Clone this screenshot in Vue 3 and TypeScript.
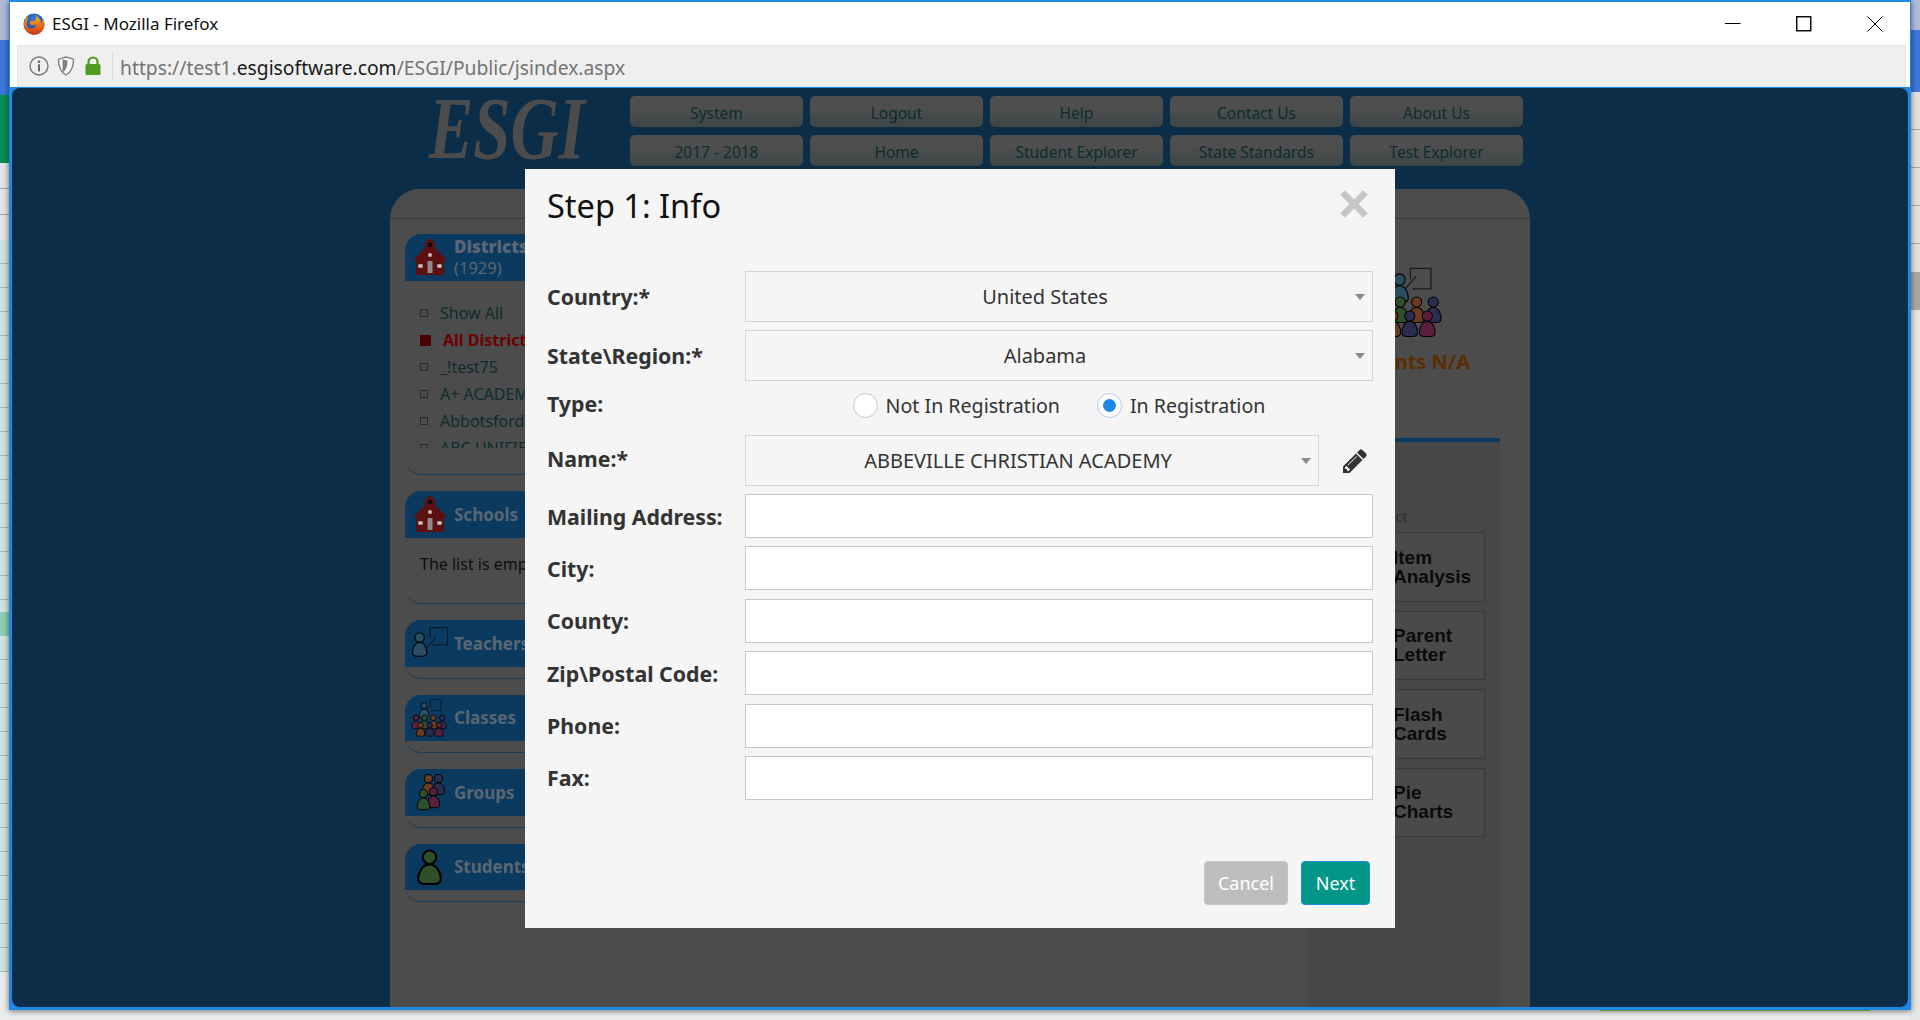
<script setup lang="ts">
import { ref } from 'vue';

type Person = { x: number; y: number; s: number; c: string };

const topNav = ['System', 'Logout', 'Help', 'Contact Us', 'About Us', '2017 - 2018', 'Home', 'Student Explorer', 'State Standards', 'Test Explorer'];
const districts = [
  { name: 'Show All', active: false },
  { name: 'All Districts', active: true },
  { name: '_!test75', active: false },
  { name: 'A+ ACADEMY', active: false },
  { name: 'Abbotsford', active: false },
  { name: 'ABC UNIFIED', active: false },
];
const tests = [
  ['Item', 'Analysis'],
  ['Parent', 'Letter'],
  ['Flash', 'Cards'],
  ['Pie', 'Charts'],
];
const textFields = ['Mailing Address:', 'City:', 'County:', 'Zip\\Postal Code:', 'Phone:', 'Fax:'];

const blue = '#2a4d62';
const brown = '#6a3a22';
const navy = '#2a2d50';
const red = '#5a1f3a';
const green = '#2f4f2b';

// the same little figure is reused by all the people icons
const classPeople: Person[] = [
  { x: 7.5, y: 2.5, s: 0.47, c: blue },
  { x: 0, y: 15, s: 0.42, c: red },
  { x: 8.5, y: 15, s: 0.42, c: green },
  { x: 17.3, y: 15, s: 0.42, c: brown },
  { x: 26.2, y: 15, s: 0.42, c: navy },
  { x: 4.5, y: 22.5, s: 0.42, c: brown },
  { x: 13.6, y: 22.5, s: 0.42, c: navy },
  { x: 23, y: 22.5, s: 0.42, c: red },
];
const groupPeople: Person[] = [
  { x: 6, y: 0, s: 0.62, c: brown },
  { x: 16, y: 0, s: 0.62, c: navy },
  { x: 11, y: 13, s: 0.62, c: red },
  { x: 1, y: 15, s: 0.62, c: green },
];

const regType = ref('in');
</script>

<template>
  <div class="desktop">
    <div class="sheet-left">
      <div class="seg-a"></div>
      <div class="seg-b"></div>
      <div class="seg-c"></div>
      <div class="seg-d"></div>
      <div class="seg-e"></div>
      <div class="seg-f"></div>
      <div class="seg-e2"></div>
      <div class="seg-g"></div>
    </div>
    <div class="sheet-right">
      <div class="seg-a2"></div>
      <div class="seg-b2"></div>
      <div class="seg-d2"></div>
      <div class="thumb"></div>
      <div class="seg-h"></div>
    </div>
    <div class="green-line"></div>

    <div class="window">
      <div class="titlebar">
        <svg class="ff" width="22" height="22" viewBox="0 0 22 22">
          <defs>
            <radialGradient id="ffGlobe" cx="0.55" cy="0.3" r="0.7">
              <stop offset="0" stop-color="#3f7fd0" />
              <stop offset="1" stop-color="#1f3f86" />
            </radialGradient>
            <linearGradient id="ffFox" x1="0" y1="0" x2="0" y2="1">
              <stop offset="0" stop-color="#f7b21c" />
              <stop offset="0.6" stop-color="#e8631a" />
              <stop offset="1" stop-color="#c8341a" />
            </linearGradient>
          </defs>
          <circle cx="11" cy="11" r="10.5" fill="url(#ffGlobe)" />
          <path d="M5 2.5C1.5 6 .2 11 1.8 15c1.8 4.4 5.5 6.8 9.4 6.8 5.6 0 10.3-4.5 10.3-10.3 0-2.4-.8-4.6-2.2-6.4.4 2.8-.2 4.8-1.2 6 .2-3.6-2-6.6-5.4-8.6 1.2 2.2.8 4.4-.8 5.2-1.6.6-3.4-.2-4.6.8-1 .9-.8 2.4.6 3.2 2 .9 4.6.2 5.4-.4-.2 2.6-2.6 4.6-5.4 4.4C5 15.4 3.2 12.4 3.8 9.4 4 8 4.6 6.4 5 2.5z" fill="url(#ffFox)" />
        </svg>
        <span class="win-title">ESGI - Mozilla Firefox</span>
        <div class="win-controls">
          <svg width="16" height="16" viewBox="0 0 16 16"><path d="M0 7.5h15.5" stroke="#000" stroke-width="1" /></svg>
          <svg width="16" height="16" viewBox="0 0 16 16"><rect x="0.75" y="0.75" width="14" height="14" fill="none" stroke="#000" stroke-width="1.4" /></svg>
          <svg width="16" height="16" viewBox="0 0 16 16"><path d="M.5.5l15 15M15.5.5l-15 15" stroke="#000" stroke-width="1" /></svg>
        </div>
      </div>

      <div class="urlbar">
        <svg class="u-info" width="20" height="20" viewBox="0 0 20 20">
          <circle cx="10" cy="10" r="9" fill="none" stroke="#777" stroke-width="1.4" />
          <circle cx="10" cy="5.8" r="1.3" fill="#666" />
          <rect x="9" y="8.4" width="2" height="7" fill="#666" />
        </svg>
        <svg class="u-shield" width="18" height="20" viewBox="0 0 18 20">
          <path d="M9 1l7.5 2.2c0 7-1.5 12.6-7.5 15.8C3 15.800 1.500 10.200 1.500 3.200z" fill="#fafafa" stroke="#808080" stroke-width="1.4" />
          <path d="M9 3.200l5 1.500c0 5-1 9.200-5 11.800z" fill="#808080" transform="translate(-3.500 0)" />
        </svg>
        <svg class="u-lock" width="18" height="20" viewBox="0 0 18 20">
          <path d="M4.500 9V6a4.500 4.500 0 0 1 9 0v3" fill="none" stroke="#4f9c20" stroke-width="2.200" />
          <rect x="1.500" y="8" width="15" height="11" rx="1.500" fill="#4f9c20" />
        </svg>
        <span class="u-sep"></span>
        <span class="url">https://test1.<b>esgisoftware.com</b>/ESGI/Public/jsindex.aspx</span>
      </div>

      <div class="viewport-frame">
        <div class="viewport">
          <div class="page">
            <header class="page-head">
              <div class="logo">ESGI</div>
              <nav class="top-nav">
                <div v-for="n in topNav" :key="n" class="nav-btn">{{ n }}</div>
              </nav>
            </header>

            <section class="panel">
              <div class="panel-cap"></div>
              <div class="panel-body">
                <aside class="sidebar">
                  <div class="box box-districts">
                    <div class="box-head">
                      <span class="box-icon">
                        <svg width="34" height="38" viewBox="0 0 34 38">
                          <path d="M17 0l5 5v5l12 12h-3v15H3V22H0l12-12V5z" fill="#5c1010" />
                          <rect x="15" y="5" width="4" height="4" fill="#0a0a0a" />
                          <path d="M15 15h4v4h-4zM5 26h5v4H5zM24 26h5v4h-5z" fill="#c8c8c8" stroke="#5c1010" stroke-width=".6" />
                          <rect x="14.500" y="23" width="5" height="12" fill="#8a8a8a" />
                        </svg>
                      </span>
                      <span class="box-title two">
                        <b>Districts</b>
                        <span>(1929)</span>
                      </span>
                    </div>
                    <div class="district-list">
                      <div v-for="d in districts" :key="d.name" class="district" :class="{ on: d.active }">
                        <i class="mark"></i>{{ d.name }}
                      </div>
                    </div>
                  </div>

                  <div class="box box-schools">
                    <div class="box-head">
                      <span class="box-icon">
                        <svg width="34" height="38" viewBox="0 0 34 38">
                          <path d="M17 0l5 5v5l12 12h-3v15H3V22H0l12-12V5z" fill="#5c1010" />
                          <rect x="15" y="5" width="4" height="4" fill="#0a0a0a" />
                          <path d="M15 15h4v4h-4zM5 26h5v4H5zM24 26h5v4h-5z" fill="#c8c8c8" stroke="#5c1010" stroke-width=".6" />
                          <rect x="14.500" y="23" width="5" height="12" fill="#8a8a8a" />
                        </svg>
                      </span>
                      <b class="box-title">Schools</b>
                    </div>
                    <div class="empty">The list is empty</div>
                  </div>

                  <div class="box">
                    <div class="box-head">
                      <span class="box-icon">
                        <svg width="37" height="32" viewBox="0 0 37 32">
                          <g transform="translate(0 4) scale(.72)">
                            <circle cx="12" cy="9" r="6.500" fill="#2a4d62" stroke="#000" stroke-width="1.500" />
                            <path d="M12 16C5 16 2 24 2 30c0 4 3 5 6 5h8c3 0 6-1 6-5 0-6-3-14-10-14z" fill="#2a4d62" stroke="#000" stroke-width="1.500" />
                          </g>
                          <path d="M19 .6h17.400v17.400H21" fill="none" stroke="#0a1a24" stroke-width="1.100" />
                          <path d="M19 .6v10M16 21l9-11" fill="none" stroke="#0a1a24" stroke-width="1.100" />
                        </svg>
                      </span>
                      <b class="box-title">Teachers</b>
                    </div>
                  </div>

                  <div class="box">
                    <div class="box-head">
                      <span class="box-icon">
                        <svg width="37" height="38" viewBox="0 0 37 38">
                          <path d="M19 .7h11v11H20M19 .7v6M15 13l7-8" fill="none" stroke="#0a1a24" stroke-width=".9" />
                          <g v-for="(p, i) in classPeople" :key="i" :transform="`translate(${p.x} ${p.y}) scale(${p.s})`">
                            <circle cx="12" cy="9" r="6.500" :fill="p.c" stroke="#000" stroke-width="1.800" />
                            <path d="M12 16C5 16 2 24 2 30c0 4 3 5 6 5h8c3 0 6-1 6-5 0-6-3-14-10-14z" :fill="p.c" stroke="#000" stroke-width="1.800" />
                          </g>
                        </svg>
                      </span>
                      <b class="box-title">Classes</b>
                    </div>
                  </div>

                  <div class="box">
                    <div class="box-head">
                      <span class="box-icon">
                        <svg width="30" height="38" viewBox="0 0 30 38">
                          <g v-for="(p, i) in groupPeople" :key="i" :transform="`translate(${p.x} ${p.y}) scale(${p.s})`">
                            <circle cx="12" cy="9" r="6.500" :fill="p.c" stroke="#000" stroke-width="1.600" />
                            <path d="M12 16C5 16 2 24 2 30c0 4 3 5 6 5h8c3 0 6-1 6-5 0-6-3-14-10-14z" :fill="p.c" stroke="#000" stroke-width="1.600" />
                          </g>
                        </svg>
                      </span>
                      <b class="box-title">Groups</b>
                    </div>
                  </div>

                  <div class="box">
                    <div class="box-head">
                      <span class="box-icon">
                        <svg width="25" height="37" viewBox="0 0 24 36">
                          <circle cx="12" cy="9" r="6.500" fill="#2f4f2b" stroke="#000" stroke-width="2" />
                          <path d="M12 16C5 16 1 24 1 30c0 4 3 5 6 5h10c3 0 6-1 6-5 0-6-4-14-11-14z" fill="#2f4f2b" stroke="#000" stroke-width="2" />
                        </svg>
                      </span>
                      <b class="box-title">Students</b>
                    </div>
                  </div>
                </aside>

                <div class="content">
                  <div class="summary">
                    <div class="summary-box">
                      <svg class="summary-icon" width="69" height="71" viewBox="0 0 37 38">
                        <path d="M19 .7h11v11H20M19 .7v6M15 13l7-8" fill="none" stroke="#1a1a1a" stroke-width=".7" />
                        <g v-for="(p, i) in classPeople" :key="i" :transform="`translate(${p.x} ${p.y}) scale(${p.s})`">
                          <circle cx="12" cy="9" r="6.500" :fill="p.c" stroke="#000" stroke-width="1.300" />
                          <path d="M12 16C5 16 2 24 2 30c0 4 3 5 6 5h8c3 0 6-1 6-5 0-6-3-14-10-14z" :fill="p.c" stroke="#000" stroke-width="1.300" />
                        </g>
                      </svg>
                      <b class="students-na">Students N/A</b>
                    </div>
                  </div>
                  <div class="tests">
                    <div class="tests-head">
                      <div class="th-a">Test</div>
                      <div class="th-b">Select</div>
                    </div>
                    <div v-for="t in tests" :key="t[0]" class="test-btn">
                      <span>{{ t[0] }}</span>
                      <span>{{ t[1] }}</span>
                    </div>
                  </div>
                </div>
              </div>
            </section>
          </div>

          <div class="modal">
            <div class="modal-head">
              <h2>Step 1: Info</h2>
              <svg class="close" width="30" height="30" viewBox="0 0 30 30">
                <path d="M3.500 3.500l23 23M26.500 3.500l-23 23" stroke="#c6c6c6" stroke-width="6.500" />
              </svg>
            </div>

            <div class="form">
              <div class="row row-select">
                <label>Country:*</label>
                <div class="select">United States</div>
              </div>
              <div class="row row-select">
                <label>State\Region:*</label>
                <div class="select">Alabama</div>
              </div>
              <div class="row row-type">
                <label>Type:</label>
                <div class="radios">
                  <span class="radio-item" @click="regType = 'not'">
                    <i class="radio" :class="{ on: regType === 'not' }"></i>Not In Registration
                  </span>
                  <span class="radio-item" @click="regType = 'in'">
                    <i class="radio" :class="{ on: regType === 'in' }"></i>In Registration
                  </span>
                </div>
              </div>
              <div class="row row-select row-name">
                <label>Name:*</label>
                <div class="select">ABBEVILLE CHRISTIAN ACADEMY</div>
                <svg class="pencil" width="28" height="28" viewBox="0 0 1792 1792">
                  <path d="M491 1536l91-91-235-235-91 91v107h128v128h107zm523-928q0-22-22-22-10 0-17 7l-542 542q-7 7-7 17 0 22 22 22 10 0 17-7l542-542q7-7 7-17zm-54-192l416 416-832 832h-416v-416zm683 96q0 53-37 90l-166 166-416-416 166-165q36-38 90-38 53 0 91 38l235 234q37 39 37 91z" fill="#333" />
                </svg>
              </div>
              <div v-for="f in textFields" :key="f" class="row row-input">
                <label>{{ f }}</label>
                <input type="text" />
              </div>
            </div>

            <div class="modal-foot">
              <button class="btn cancel">Cancel</button>
              <button class="btn next">Next</button>
            </div>
          </div>
        </div>
      </div>
    </div>
  </div>
</template>

<style>
html, body { margin: 0; padding: 0; }
</style>

<style scoped>
.desktop {
  position: relative;
  width: 1920px;
  height: 1020px;
  overflow: hidden;
  background: linear-gradient(#c9c9c9, #ececec 9px);
  font-family: "Noto Sans", "Liberation Sans", sans-serif;
}

/* bits of the spreadsheet behind the browser window */
.sheet-left, .sheet-right {
  position: absolute;
  top: 0;
  width: 10px;
  height: 1020px;
  display: flex;
  flex-direction: column;
}
.sheet-left { left: 0; }
.sheet-right { right: 0; }
.seg-a { height: 40px; background: #aebad6; }
.seg-b { height: 55px; background: #3f78dc; }
.seg-c { height: 68px; background: #0c8f50; }
.seg-d { height: 77px; background: repeating-linear-gradient(#e4e4e4 0 25px, #a6a6a6 25px 26px); }
.seg-e {
  height: 372px;
  background: repeating-linear-gradient(#d4e4dc 0 23px, #a9b5af 23px 24px);
}
.seg-f { height: 24px; background: #90ccb0; }
.seg-e2 {
  height: 336px;
  background: repeating-linear-gradient(#d4e4dc 0 23px, #a9b5af 23px 24px);
}
.seg-g { flex: 1; background: #ececec; }
.seg-a2 { height: 30px; background: #b0bcd8; }
.seg-b2 { height: 62px; background: #3f78dc; }
.seg-d2 { height: 180px; background: repeating-linear-gradient(#e2e2e2 0 37px, #a8a8a8 37px 38px); }
.thumb { height: 38px; background: #a8a8a8; }
.seg-h { flex: 1; background: #e6e6e6; }
.green-line {
  position: absolute;
  left: 1600px;
  top: 1010px;
  width: 270px;
  height: 1px;
  background: #5d9428;
  z-index: 2;
}

.window {
  position: absolute;
  left: 9px;
  top: 0;
  width: 1902px;
  height: 1010px;
  box-sizing: border-box;
  border: 1px solid #1e88e5;
  border-top-width: 2px;
  background: #fff;
  box-shadow: 0 1px 6px rgba(0, 0, 0, 0.55);
  display: flex;
  flex-direction: column;
}

.titlebar {
  height: 43px;
  display: flex;
  align-items: center;
  padding-left: 13px;
  flex: none;
}
.ff { margin-right: 7px; }
.win-title { font-size: 17px; color: #111; }
.win-controls {
  margin-left: auto;
  display: flex;
  gap: 55px;
  padding-right: 27px;
}

.urlbar {
  height: 42px;
  margin: 0 4px 0 7px;
  box-sizing: border-box;
  border: 1px solid #e4e4e4;
  background: #efefef;
  display: flex;
  align-items: center;
  flex: none;
}
.u-info { margin-left: 11px; }
.u-shield { margin-left: 8px; }
.u-lock { margin-left: 9px; }
.u-sep {
  width: 1px;
  height: 26px;
  background: #d8d8d8;
  margin-left: 10px;
}
.url {
  margin-left: 7px;
  padding-top: 2px;
  font-size: 19.3px;
  color: #737373;
  white-space: nowrap;
}
.url b { font-weight: 400; color: #1a1a1a; }

.viewport-frame {
  flex: 1;
  min-height: 0;
  box-sizing: border-box;
  padding: 1px 2px 2px 2px;
  background: #1e88e5;
  display: flex;
}
.viewport {
  position: relative;
  flex: 1;
  background: #0b2d48;
  border-radius: 8px;
  overflow: hidden;
}

.page {
  height: 100%;
  margin-left: 378px;
  width: 1140px;
  display: flex;
  flex-direction: column;
}
.page-head {
  height: 101px;
  box-sizing: border-box;
  padding-top: 8px;
  display: flex;
  flex: none;
}
.logo {
  width: 240px;
  box-sizing: border-box;
  padding-left: 38px;
  font-family: "Liberation Serif", serif;
  font-weight: 700;
  font-style: italic;
  font-size: 88px;
  line-height: 66px;
  color: #4c4c4c;
  white-space: nowrap;
  transform: scaleX(0.76);
  transform-origin: 41px 0;
  -webkit-box-reflect: below -10px linear-gradient(transparent 72%, rgba(255, 255, 255, 0.12));
}
.top-nav {
  display: grid;
  grid-template-columns: repeat(5, 173px);
  grid-auto-rows: 31px;
  gap: 8px 7px;
}
.nav-btn {
  border-radius: 5px;
  background: linear-gradient(#4e4e4e 40%, #3c4646);
  color: #0c2c2e;
  font-size: 15.5px;
  text-align: center;
  line-height: 34px;
}

.panel {
  flex: 1;
  display: flex;
  flex-direction: column;
  min-height: 0;
  background: #4c4c4c;
  border-radius: 30px 30px 0 0;
}
.panel-cap {
  height: 29px;
  flex: none;
  border-bottom: 1px solid #3a3a3a;
}
.panel-body {
  flex: 1;
  display: flex;
  min-height: 0;
}
.sidebar {
  width: 300px;
  margin-left: 15px;
  padding-top: 15px;
  display: flex;
  flex-direction: column;
  gap: 16px;
  flex: none;
}

.box {
  height: 58.5px;
  box-sizing: border-box;
  border-bottom: 1px solid #163f5e;
  border-radius: 16px 0 0 16px;
}
.box-districts { height: 241px; }
.box-schools { height: 113px; }
.box-head {
  height: 46.5px;
  background: #0b3a60;
  border-radius: 16px 0 0 0;
  display: flex;
  align-items: center;
}
.box-icon {
  width: 49px;
  display: flex;
  justify-content: center;
  flex: none;
}
.box-title {
  font-size: 17px;
  font-weight: 700;
  color: #5a6672;
}
.box-title.two {
  display: flex;
  flex-direction: column;
  line-height: 21px;
}
.box-title.two span { font-weight: 400; font-size: 16.500px; }

.district-list {
  margin-top: 19px;
  height: 148px;
  overflow: hidden;
  padding-left: 15px;
}
.district {
  height: 27px;
  line-height: 27px;
  font-size: 16px;
  color: #0c2c2e;
  white-space: nowrap;
  display: flex;
  align-items: center;
}
.mark {
  width: 6px;
  height: 6px;
  border: 1px solid #2a2a2a;
  margin-right: 12px;
}
.district.on { color: #6c0000; font-weight: 700; }
.district.on .mark {
  width: 11px;
  height: 11px;
  border: 0;
  background: #4a0000;
}
.empty {
  padding: 15px 0 0 15px;
  font-size: 16px;
  color: #0f0f0f;
}

.content {
  flex: 1;
  display: flex;
  flex-direction: column;
  min-width: 0;
}
.summary {
  height: 219px;
  box-sizing: border-box;
  flex: none;
  padding: 48px 60px 0 0;
  display: flex;
  justify-content: flex-end;
}
.summary-box {
  display: flex;
  flex-direction: column;
  align-items: center;
  height: 100px;
}
.summary-icon { margin-left: 12px; flex: none; }
.students-na {
  margin-top: 10px;
  font-size: 20px;
  color: #5a2e00;
}
.tests {
  flex: 1;
  width: 192px;
  margin: 0 30px 0 auto;
  box-sizing: border-box;
  background: #474747;
  border-top: 4px solid #0b3a60;
  padding-right: 15px;
}
.tests-head {
  height: 90px;
  box-sizing: border-box;
  padding: 34px 0 0 60px;
  font-family: "Liberation Serif", serif;
  font-size: 16px;
  color: #2e2e2e;
}
.th-a { height: 30px; line-height: 22px; font-weight: 700; }
.th-b { line-height: 22px; }
.test-btn {
  margin-left: 12px;
  height: 69.5px;
  margin-bottom: 9px;
  box-sizing: border-box;
  border: 1px solid #393939;
  background: #4a4a4a;
  padding-left: 72px;
  font-family: "Liberation Sans", sans-serif;
  font-size: 19px;
  line-height: 19px;
  font-weight: 700;
  color: #0a0a0a;
  display: flex;
  flex-direction: column;
  justify-content: center;
}

.modal {
  position: absolute;
  left: 513px;
  top: 81px;
  width: 870px;
  height: 759px;
  box-sizing: border-box;
  background: #f5f5f5;
  padding: 0 22px 0 22px;
  display: flex;
  flex-direction: column;
}
.modal-head {
  height: 102px;
  flex: none;
  display: flex;
  justify-content: space-between;
  align-items: flex-start;
}
.modal-head h2 {
  margin: 15px 0 0;
  font-size: 32.500px;
  font-weight: 400;
  line-height: 44px;
  color: #111;
}
.close { margin: 20px 4px 0 0; }

.form { display: flex; flex-direction: column; }
.row {
  display: flex;
  align-items: center;
}
.row label {
  width: 198px;
  flex: none;
  font-size: 21.300px;
  font-weight: 700;
  color: #333;
  white-space: nowrap;
}
.row-select { height: 51px; margin-bottom: 8px; }
.row-type { height: 54px; margin-top: -8px; padding-bottom: 6px; box-sizing: border-box; }
.row-type label { margin-top: -4px; }
.row-name label { margin-top: -5px; }
.row-input { height: 44px; margin-bottom: 8.4px; }
.select {
  position: relative;
  flex: 1;
  height: 100%;
  box-sizing: border-box;
  border: 1px solid #d4d4d4;
  padding-right: 28px;
  display: flex;
  align-items: center;
  justify-content: center;
  font-size: 20px;
  color: #333;
}
.select::after {
  content: "";
  position: absolute;
  right: 7px;
  top: 22px;
  border-style: solid;
  border-width: 6px 5.500px 0;
  border-color: #888 transparent transparent;
}
.pencil { margin: 0 4px 0 22px; flex: none; }
.radios {
  flex: 1;
  display: flex;
  justify-content: center;
  gap: 37px;
  font-size: 19.600px;
  color: #333;
}
.radio-item { display: flex; align-items: center; }
.radio {
  width: 25px;
  height: 25px;
  box-sizing: border-box;
  border: 1px solid #c9c9c9;
  border-radius: 50%;
  background: #fff;
  margin-right: 8px;
  position: relative;
}
.radio.on { border-color: #b4cde8; }
.radio.on::after {
  content: "";
  position: absolute;
  left: 5px;
  top: 5px;
  width: 13px;
  height: 13px;
  border-radius: 50%;
  background: #1e88e5;
}
input {
  flex: 1;
  min-width: 0;
  height: 100%;
  box-sizing: border-box;
  border: 1px solid #c6c6c6;
  background: #fff;
  margin: 0;
  padding: 0 8px;
}

.modal-foot {
  display: flex;
  justify-content: flex-end;
  gap: 13px;
  margin-top: auto;
  padding: 0 3px 23px 0;
}
.btn {
  height: 44px;
  box-sizing: border-box;
  border-radius: 4px;
  font-family: inherit;
  font-size: 18px;
  color: #fff;
}
.cancel {
  width: 84px;
  background: #bdbdbd;
  border: 1px solid #c4c4c4;
}
.next {
  width: 69px;
  background: #009688;
  border: 1px solid #1e88e5;
}
</style>
